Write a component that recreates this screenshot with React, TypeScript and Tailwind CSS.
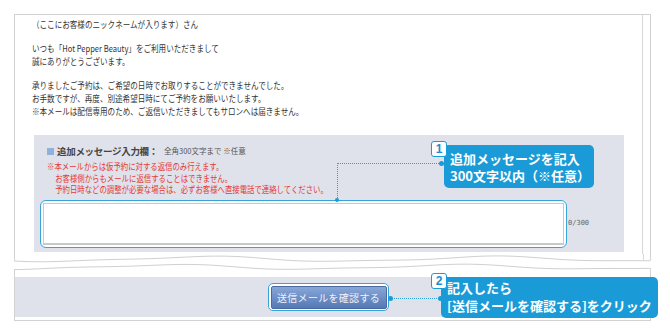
import React from "react";

const W = 637;
function waveY(base: number, amp: number, phase: number, x: number) {
  return (
    base +
    amp * Math.sin((x / W) * Math.PI * 2 * 2.2 + phase) +
    0.7 * Math.sin((x / W) * Math.PI * 2 * 4.7 + phase * 1.7)
  );
}
function wavePath(base: number, amp: number, phase: number) {
  let d = "";
  for (let x = 0; x <= W; x += 3) {
    d += (x === 0 ? "M" : "L") + x + " " + waveY(base, amp, phase, x).toFixed(2) + " ";
  }
  return d;
}

const jp = "font-['Noto_Sans_CJK_JP','Noto_Sans',sans-serif]";

function Badge({ n }: { n: string }) {
  return (
    <div className="absolute w-[16px] h-[16px] bg-white border-[1.5px] border-[#1a9bd7] rounded-[3px] flex items-center justify-center text-[12px] leading-none font-bold text-[#1a8fd0] font-['Liberation_Sans',sans-serif]">
      {n}
    </div>
  );
}

export default function App() {
  const w1 = { base: 5, amp: 2.4, phase: 0.6 };
  const w2 = { base: 13, amp: 2.2, phase: 1.4 };
  return (
    <div className={`relative w-[670px] h-[330px] bg-white overflow-hidden ${jp}`}>
      {/* top frame */}
      <div className="ml-[14px] mt-[14px] w-[637px] h-[240px] border-l border-t border-r border-[#d2d2d2] flex">
        <div className="w-[628px] flex flex-col">
          <div className="pl-[17px] pt-[2.5px] text-[9px] leading-[13px] text-[#333]">
            <div className="origin-left scale-x-[0.84] w-[600px]">
              <p>（ここにお客様のニックネームが入ります）さん</p>
              <p className="mt-[11px]">いつも「Hot Pepper Beauty」をご利用いただきまして</p>
              <p>誠にありがとうございます。</p>
              <p className="mt-[11px]">承りましたご予約は、ご希望の日時でお取りすることができませんでした。</p>
              <p>お手数ですが、再度、別途希望日時にてご予約をお願いいたします。</p>
              <p>※本メールは配信専用のため、ご返信いただきましてもサロンへは届きません。</p>
            </div>
          </div>
          <div className="ml-[19px] mt-[17.5px] w-[590px] h-[117px] bg-[#dfe2ea] pl-[6px] pt-[10px] flex flex-col">
            <div className="ml-[7px] flex items-center h-[12px]">
              <div className="w-[7px] h-[7px] bg-[#8fb1da]" />
              <span className="ml-[3px] text-[9.5px] font-bold text-[#444] tracking-[-0.3px]">追加メッセージ入力欄：</span>
              <span className="ml-[6px] text-[7.5px] text-[#555]">全角300文字まで ※任意</span>
            </div>
            <div className="ml-[7px] mt-[4px] text-[9px] leading-[11.5px] text-[#e53935]">
              <div className="origin-left scale-x-[0.82] w-[500px]">
                <p>※本メールからは仮予約に対する返信のみ行えます。</p>
                <p className="pl-[10px]">お客様側からもメールに返信することはできません。</p>
                <p className="pl-[10px]">予約日時などの調整が必要な場合は、必ずお客様へ直接電話で連絡してください。</p>
              </div>
            </div>
            <div className="mt-[4px] flex items-center">
              <div className="w-[527px] h-[48px] border-[1.5px] border-[#36a3da] rounded-[6px] bg-white p-[2px]">
                <div className="w-full h-full border border-[#c9c9c9] border-b-[2px] bg-white" />
              </div>
              <span className="ml-[1px] text-[7px] text-[#666] font-['DejaVu_Sans_Mono',monospace]">0/300</span>
            </div>
          </div>
        </div>
        <div className="w-[8px] border-l border-[#d8d8d8]" />
      </div>

      {/* wave break */}
      <svg className="block ml-[14px]" width={W} height={18} viewBox={`0 0 ${W} 18`}>
        <path d={wavePath(w1.base, w1.amp, w1.phase)} fill="none" stroke="#d0d0d0" strokeWidth={1} />
        <path d={wavePath(w2.base, w2.amp, w2.phase)} fill="none" stroke="#d0d0d0" strokeWidth={1} />
        <line x1={0.5} y1={0} x2={0.5} y2={waveY(w1.base, w1.amp, w1.phase, 0)} stroke="#d2d2d2" />
        <line x1={629.5} y1={0} x2={629.5} y2={waveY(w1.base, w1.amp, w1.phase, 629)} stroke="#d8d8d8" />
        <line x1={636.5} y1={0} x2={636.5} y2={waveY(w1.base, w1.amp, w1.phase, 637)} stroke="#d2d2d2" />
        <line x1={0.5} y1={waveY(w2.base, w2.amp, w2.phase, 0)} x2={0.5} y2={18} stroke="#d2d2d2" />
        <line x1={636.5} y1={waveY(w2.base, w2.amp, w2.phase, 637)} x2={636.5} y2={18} stroke="#d2d2d2" />
      </svg>

      {/* bottom frame */}
      <div className="ml-[14px] w-[637px] h-[49px] border-l border-r border-b border-[#d2d2d2] pt-[5px]">
        <div className="h-[40px] bg-[#dfe2ea] flex items-center pl-[253px]">
          <div className="w-[121px] h-[28px] border-[1.5px] border-[#36a3da] rounded-[5px] bg-white p-[1.5px]">
            <div className="w-full h-full rounded-[2px] border border-[#4a6aa0] bg-gradient-to-b from-[#87a7d8] to-[#5579b4] flex items-center justify-center text-[10px] text-[#eef2fa] tracking-[0.3px]">
              送信メールを確認する
            </div>
          </div>
        </div>
      </div>

      {/* callout 1 */}
      <div className="absolute left-[337px] top-[163px] w-[104px] border-t border-dotted border-[#2f9fd8]" />
      <div className="absolute left-[337px] top-[163px] h-[37px] border-l border-dotted border-[#2f9fd8]" />
      <div className="absolute left-[335px] top-[198px] w-[4px] h-[4px] rounded-full bg-[#1a9bd7]" />
      <div className="absolute left-[439px] top-[161px] w-[5px] h-[5px] rounded-full bg-[#1a9bd7]" />
      <div className="absolute left-[444px] top-[145px] w-[150px] h-[43px] rounded-[5px] bg-[#1a9bd7] pl-[6px] pt-[5px] text-[13px] leading-[17px] font-bold text-white whitespace-nowrap">
        <p>追加メッセージを記入</p>
        <p>300文字以内（※任意）</p>
      </div>
      <div className="absolute left-[431px] top-[141px]">
        <Badge n="1" />
      </div>

      {/* callout 2 */}
      <div className="absolute left-[390px] top-[298px] w-[51px] border-t border-dotted border-[#2f9fd8]" />
      <div className="absolute left-[388px] top-[296px] w-[5px] h-[5px] rounded-full bg-[#1a9bd7]" />
      <div className="absolute left-[438px] top-[296px] w-[5px] h-[5px] rounded-full bg-[#1a9bd7]" />
      <div className="absolute left-[441px] top-[277px] w-[217px] h-[41px] rounded-[5px] bg-[#1a9bd7] pl-[6px] pt-[2px] text-[13px] leading-[18px] font-bold text-white whitespace-nowrap">
        <p>記入したら</p>
        <p>[送信メールを確認する]をクリック</p>
      </div>
      <div className="absolute left-[431px] top-[273px]">
        <Badge n="2" />
      </div>
    </div>
  );
}
